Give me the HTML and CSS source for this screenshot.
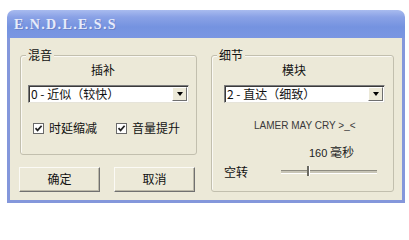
FILE: index.html
```
<!DOCTYPE html>
<html lang="zh-CN">
<head>
<meta charset="utf-8">
<title>E.N.D.L.E.S.S</title>
<link rel="stylesheet" href="styles.css">
</head>
<body>
<div class="window">
  <div class="titlebar"><span class="title">E.N.D.L.E.S.S</span></div>
  <div class="client">
    <div class="col-left">
      <div class="group g-mix">
        <span class="legend">混音</span>
        <div class="caption">插补</div>
        <div class="combo"><span class="combo-text">0 - 近似（较快）</span><span class="drop"><span class="arrow"></span></span></div>
        <div class="checks">
          <div class="check"><span class="box"><svg width="9" height="9" viewBox="0 0 9 9"><path d="M1.5 4.2 L3.6 6.4 L7.6 1.8" fill="none" stroke="#222" stroke-width="1.7"/></svg></span><span>时延缩减</span></div>
          <div class="check"><span class="box"><svg width="9" height="9" viewBox="0 0 9 9"><path d="M1.5 4.2 L3.6 6.4 L7.6 1.8" fill="none" stroke="#222" stroke-width="1.7"/></svg></span><span>音量提升</span></div>
        </div>
      </div>
      <div class="buttons">
        <div class="btn btn-ok">确定</div>
        <div class="btn">取消</div>
      </div>
    </div>
    <div class="group g-detail">
      <span class="legend">细节</span>
      <div class="caption">模块</div>
      <div class="combo combo-r"><span class="combo-text">2 - 直达（细致）</span><span class="drop"><span class="arrow"></span></span></div>
      <div class="credit">LAMER MAY CRY &gt;_&lt;</div>
      <div class="value"><span class="num">160</span> 毫秒</div>
      <div class="slider-row">
        <span class="slider-label">空转</span>
        <div class="track"><span class="thumb" style="left:27%"></span></div>
      </div>
    </div>
  </div>
</div>
</body>
</html>
```
FILE: styles.css
```
html, body {
  margin: 0;
  padding: 0;
  background: #ffffff;
}
body {
  font-family: "Noto Sans CJK SC", "Noto Sans", sans-serif;
  font-size: 12px;
  color: #111;
}
.window {
  margin: 10px 0 0 7px;
  width: 398px;
}
.titlebar {
  height: 28px;
  box-sizing: border-box;
  padding: 4px 0 0 7px;
  border-radius: 7px 7px 0 0;
  background: linear-gradient(to bottom, #a9bbef 0%, #8aa2e6 25%, #7593e0 60%, #7a96e2 100%);
}
.title {
  font-family: "Liberation Serif", serif;
  font-weight: bold;
  font-size: 14px;
  line-height: 22px;
  letter-spacing: 1.4px;
  color: #e6ebfa;
  text-shadow: 1px 1px 0 #6b82c9;
}
.client {
  display: flex;
  align-items: flex-start;
  gap: 14px;
  height: 145px;
  padding: 17px 0 0 10px;
  background: #ece9d8;
  border: 3px solid #8497db;
  border-top: 0;
}
.col-left {
  width: 177px;
  display: flex;
  flex-direction: column;
}
.group {
  position: relative;
  box-sizing: border-box;
  border: 1px solid #c2bfae;
  border-radius: 3px;
  box-shadow: inset 1px 1px 0 #faf9f4;
}
.g-mix {
  height: 100px;
}
.g-detail {
  width: 183px;
  height: 137px;
}
.legend {
  position: absolute;
  top: -8px;
  left: 5px;
  padding: 0 2px;
  line-height: 14px;
  background: #ece9d8;
}
.caption {
  margin-top: 7px;
  padding-left: 70px;
  line-height: 14px;
}
.combo {
  display: flex;
  align-items: stretch;
  box-sizing: border-box;
  width: 161px;
  height: 18px;
  margin: 8px 0 0 7px;
  background: #fff;
  border-top: 1px solid #7c7c7c;
  border-left: 1px solid #7c7c7c;
  border-right: 1px solid #e6e4da;
  border-bottom: 1px solid #e6e4da;
  box-shadow: inset 1px 1px 0 #3a3a3a;
}
.combo-r {
  margin-left: 12px;
}
.combo-text {
  flex: 1;
  padding-left: 2px;
  line-height: 16px;
  white-space: nowrap;
}
.drop {
  width: 15px;
  margin: 1px 1px 1px 0;
  box-sizing: border-box;
  background: #ece9d8;
  border-top: 1px solid #fff;
  border-left: 1px solid #fff;
  border-right: 1px solid #6f6f6f;
  border-bottom: 1px solid #6f6f6f;
  display: flex;
  align-items: center;
  justify-content: center;
}
.arrow {
  width: 0;
  height: 0;
  border-left: 3.5px solid transparent;
  border-right: 3.5px solid transparent;
  border-top: 4px solid #000;
}
.checks {
  display: flex;
  margin: 18px 0 0 12px;
  gap: 19px;
  line-height: 14px;
}
.check {
  display: flex;
  align-items: center;
  gap: 5px;
}
.box {
  width: 11px;
  height: 11px;
  box-sizing: border-box;
  border: 1px solid #6a6a6a;
  background: #fff;
  display: flex;
  align-items: center;
  justify-content: center;
}
.box svg {
  display: block;
}
.buttons {
  display: flex;
  gap: 14px;
  margin-top: 12px;
}
.btn {
  box-sizing: border-box;
  width: 81px;
  height: 25px;
  line-height: 22px;
  text-align: center;
  border-top: 1px solid #fbfaf5;
  border-left: 1px solid #fbfaf5;
  border-right: 1px solid #707070;
  border-bottom: 1px solid #707070;
  box-shadow: inset -1px -1px 0 #bcb9a9;
}
.btn-ok {
  margin-left: -1px;
}
.credit {
  margin-top: 16px;
  padding-left: 42px;
  font-family: "Liberation Sans", Arial, sans-serif;
  font-size: 10px;
  line-height: 14px;
  color: #3a3a3a;
}
.value {
  margin-top: 12px;
  padding-left: 97px;
  line-height: 14px;
  color: #222;
}
.num {
  font-family: "Liberation Sans", Arial, sans-serif;
  font-size: 11px;
}
.slider-row {
  display: flex;
  align-items: center;
  margin-top: 5px;
  padding-left: 12px;
  line-height: 14px;
}
.slider-label {
  width: 57px;
}
.track {
  position: relative;
  width: 96px;
  height: 2px;
  border-top: 1px solid #8d8b80;
  border-bottom: 1px solid #fff;
  background: #c8c5b6;
}
.thumb {
  position: absolute;
  top: -5px;
  width: 2px;
  height: 10px;
  background: #6b6a62;
  border-right: 1px solid #fff;
}
```
